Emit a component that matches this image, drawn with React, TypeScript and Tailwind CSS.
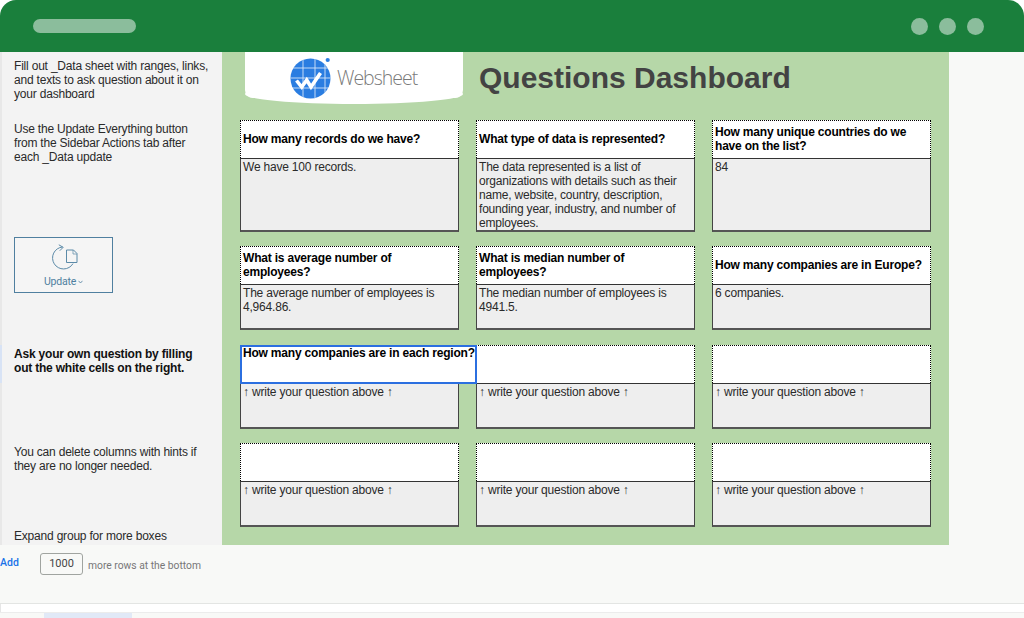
import { Fragment } from 'react';

interface Card {
  question: string;
  answer: string;
}

const HINT = '↑ write your question above ↑';

/* 四行问题卡片，行高不一样 */
const ROWS: { height: string; wrap: string; cards: Card[] }[] = [
  {
    height: 'h-[112px]',
    wrap: 'h-[126px]',
    cards: [
      { question: 'How many records do we have?', answer: 'We have 100 records.' },
      {
        question: 'What type of data is represented?',
        answer:
          'The data represented is a list of organizations with details such as their name, website, country, description, founding year, industry, and number of employees.',
      },
      { question: 'How many unique countries do we have on the list?', answer: '84' },
    ],
  },
  {
    height: 'h-[84px]',
    wrap: 'h-[99px]',
    cards: [
      {
        question: 'What is average number of employees?',
        answer: 'The average number of employees is 4,964.86.',
      },
      {
        question: 'What is median number of employees?',
        answer: 'The median number of employees is 4941.5.',
      },
      { question: 'How many companies are in Europe?', answer: '6 companies.' },
    ],
  },
  {
    height: 'h-[84px]',
    wrap: 'h-[98px]',
    cards: [
      { question: '', answer: HINT },
      { question: '', answer: HINT },
      { question: '', answer: HINT },
    ],
  },
  {
    height: 'h-[84px]',
    wrap: 'h-[84px]',
    cards: [
      { question: '', answer: HINT },
      { question: '', answer: HINT },
      { question: '', answer: HINT },
    ],
  },
];

function QuestionCard({ card, height }: { card: Card; height: string }) {
  return (
    <div className={`flex w-[219px] flex-col ${height}`}>
      <div className="flex h-[38px] shrink-0 items-center border border-b-0 border-dotted border-black bg-white px-[2px] pb-[2px] text-[12px] font-bold leading-[14px] tracking-[-0.2px] text-black">
        <span>{card.question}</span>
      </div>
      <div className="flex-1 overflow-hidden border-x border-b-2 border-t border-x-[#444] border-b-[#555] border-t-[#333] border-t-dotted bg-[#eeeeee] px-[2px] pt-[1px] text-[12px] leading-[14px] tracking-[-0.2px] text-[#2a2a2a]">
        {card.answer}
      </div>
    </div>
  );
}

function WebsheetLogo() {
  return (
    <div className="relative h-[46px] w-[218px] shrink-0 rounded-b-[8px] bg-white">
      <div className="absolute bottom-[-6px] left-0 h-[20px] w-full rounded-[50%] bg-white" />
      <div className="relative flex items-center pl-[45px] pt-[5px]">
        <svg width="44" height="42" viewBox="0 0 44 42" className="shrink-0">
          <defs>
            <clipPath id="globe">
              <circle cx="20.5" cy="21.5" r="20" />
            </clipPath>
          </defs>
          <circle cx="20.5" cy="21.5" r="20" fill="#2a7de1" />
          <g clipPath="url(#globe)" stroke="#d5e5f9" strokeWidth="0.9">
            <path d="M0 11H42M0 21H42M0 31H42M13 0V42M25 0V42M35 0V42" />
          </g>
          <path
            d="M6.5 23.5 L11.7 30 L16.7 23 L21 30 L30.5 16"
            fill="none"
            stroke="#ffffff"
            strokeWidth="3.6"
            strokeLinejoin="miter"
          />
          <circle cx="37.7" cy="3" r="2.1" fill="#2a7de1" />
        </svg>
        <span className="ml-[3px] font-['Open_Sans',sans-serif] text-[19.5px] font-light leading-none tracking-[-1px] text-[#7a7a7a]">
          Websheet
        </span>
      </div>
    </div>
  );
}

function UpdateButton() {
  return (
    <div className="mt-[73px] flex h-[56px] w-[99px] flex-col items-center border border-[#4f7f9f] bg-[#f5f5f5]">
      <svg width="34" height="28" viewBox="0 0 34 28" className="mt-[6px]" fill="none" stroke="#5b8aa8">
        <path d="M15.5 3 A11 11 0 1 0 26 19.6" strokeWidth="1" />
        <path d="M11.8 0.8 L16.2 3.3 L12.8 6.7" strokeWidth="1" />
        <path d="M19.5 6 H26.5 L30 9.5 V18.5 H19.5 Z" fill="#f5f5f5" strokeWidth="1" />
        <path d="M26 6 V10 H30" strokeWidth="0.7" />
      </svg>
      <div className="mt-[4px] flex items-center gap-[2px] font-['Roboto',sans-serif] text-[10.5px] leading-[12px] text-[#4f7f9f]">
        <span>Update</span>
        <svg width="5" height="4" viewBox="0 0 5 4" fill="none" stroke="#4f7f9f" strokeWidth="0.8">
          <path d="M0.5 0.8 L2.5 3 L4.5 0.8" />
        </svg>
      </div>
    </div>
  );
}

export default function App() {
  return (
    <div className="flex h-[618px] w-[1024px] flex-col overflow-hidden bg-white font-['Liberation_Sans',Arial,sans-serif]">
      {/* 顶部绿色窗口栏 */}
      <div className="flex h-[52px] shrink-0 items-center justify-between rounded-t-[16px] bg-[#1a7f3c] pl-[33px] pr-[40px]">
        <div className="h-[14px] w-[103px] rounded-[7px] bg-[#8bbd9c]" />
        <div className="flex gap-[11px]">
          <div className="h-[17px] w-[17px] rounded-full bg-[#8bbd9c]" />
          <div className="h-[17px] w-[17px] rounded-full bg-[#8bbd9c]" />
          <div className="h-[17px] w-[17px] rounded-full bg-[#8bbd9c]" />
        </div>
      </div>

      <div className="flex h-[493px] shrink-0 bg-[#f8f9f7]">
        {/* 左侧说明栏 */}
        <div className="relative w-[222px] shrink-0 whitespace-nowrap border-l-2 border-[#e8e8e8] bg-[#f3f3f3] pl-[12px] pr-[8px] pt-[7px] text-[12px] leading-[14px] tracking-[-0.2px] text-[#2a2a2a]">
          <div className="absolute left-[-2px] top-[293px] h-[38px] w-[2px] bg-[#d8e3f5]" />
          <p>
            Fill out _Data sheet with ranges, links,
            <br />
            and texts to ask question about it on
            <br />
            your dashboard
          </p>
          <p className="mt-[21px]">
            Use the Update Everything button
            <br />
            from the Sidebar Actions tab after
            <br />
            each _Data update
          </p>
          <UpdateButton />
          <p className="mt-[54px] font-bold text-[#111]">
            Ask your own question by filling
            <br />
            out the white cells on the right.
          </p>
          <p className="mt-[70px]">
            You can delete columns with hints if
            <br />
            they are no longer needed.
          </p>
          <p className="mt-[56px]">Expand group for more boxes</p>
        </div>

        {/* 绿色主面板 */}
        <div className="w-[727px] shrink-0 bg-[#b6d7a8]">
          <div className="flex h-[68px] items-start pl-[23px]">
            <WebsheetLogo />
            <h1 className="ml-[16px] mt-[9px] text-[30px] font-bold leading-[34px] text-[#434343]">
              Questions Dashboard
            </h1>
          </div>
          <div className="relative pl-[18px]">
            {ROWS.map((row, i) => (
              <Fragment key={i}>
                <div className={`flex items-start gap-[17px] ${row.wrap}`}>
                  {row.cards.map((card, j) => (
                    <QuestionCard key={j} card={card} height={row.height} />
                  ))}
                </div>
              </Fragment>
            ))}
            {/* 当前选中的单元格 */}
            <div className="absolute left-[18px] top-[225px] h-[39px] w-[237px] whitespace-nowrap border-2 border-[#2b6fe0] bg-white px-[1px] text-[12px] font-bold leading-[12px] tracking-[-0.2px] text-black">
              How many companies are in each region?
            </div>
          </div>
        </div>
      </div>

      {/* 底部添加行 */}
      <div className="flex h-[59px] shrink-0 items-start border-b border-[#e3e5e3] bg-[#f8f9f7] pt-[8px]">
        <span className="mt-[3px] w-[40px] font-['Roboto',sans-serif] text-[10.5px] font-medium leading-[14px] text-[#1a73e8]">
          Add
        </span>
        <div className="flex h-[22px] w-[43px] items-center justify-center rounded-[3px] border border-[#a0a4a0] font-['Roboto',sans-serif] text-[11px] text-[#444]">
          1000
        </div>
        <span className="ml-[5px] mt-[6px] font-['Roboto',sans-serif] text-[10.3px] leading-[14px] text-[#777]">
          more rows at the bottom
        </span>
      </div>
      <div className="h-[8px] shrink-0 border-l border-[#e6e6e6] bg-white" />
      <div className="flex flex-1 border-t border-[#ececec] bg-[#f8f9f7] pl-[44px]">
        <div className="h-full w-[88px] bg-[#e1e9f7]" />
      </div>
    </div>
  );
}
